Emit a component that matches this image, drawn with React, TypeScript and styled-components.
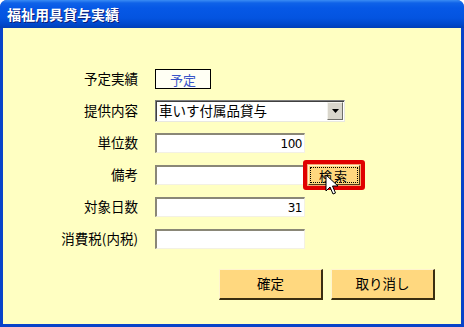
import React from "react";
import styled, { createGlobalStyle } from "styled-components";

const Global = createGlobalStyle`
  html, body { margin: 0; padding: 0; background: #fff; }
  body { font-family: "Noto Sans CJK JP", "Liberation Sans", sans-serif; }
`;

const Window = styled.div`
  width: 464px;
  height: 327px;
  box-sizing: border-box;
  display: flex;
  flex-direction: column;
  background: #0843c9;
  border-radius: 7px 7px 0 0;
  overflow: hidden;
`;

const TitleBar = styled.div`
  height: 28px;
  flex: none;
  display: flex;
  align-items: center;
  padding-left: 7px;
  background: linear-gradient(
    to bottom,
    #3a8cf4 0px,
    #0f62e8 3px,
    #0658e6 8px,
    #0454e0 18px,
    #0049cc 24px,
    #003fb8 28px
  );
  color: #fff;
  font-size: 14px;
  font-weight: bold;
  letter-spacing: 0px;
  text-shadow: 1px 1px 0 #0a1e7a;
`;

const Body = styled.div`
  flex: 1;
  margin: 0 3px 3px 3px;
  background: #ffffc2;
  display: flex;
  flex-direction: column;
  padding-top: 35px;
`;

const Form = styled.div`
  display: grid;
  grid-template-columns: 135px 1fr;
  grid-auto-rows: 32px;
  column-gap: 17px;
  align-items: center;
`;

const Label = styled.div`
  text-align: right;
  font-size: 13.5px;
  color: #000;
  white-space: nowrap;
  line-height: 1;
`;

const Control = styled.div`
  display: flex;
  align-items: center;
`;

const StatusBox = styled.div`
  width: 56px;
  height: 20px;
  box-sizing: border-box;
  border: 1px solid #000;
  background: #fffff4;
  color: #3a55c8;
  font-size: 13px;
  display: flex;
  align-items: center;
  justify-content: center;
`;

const Select = styled.div`
  width: 190px;
  height: 22px;
  box-sizing: border-box;
  background: #fff;
  border-top: 1px solid #7f7f7f;
  border-left: 1px solid #7f7f7f;
  border-right: 1px solid #e8e8e0;
  border-bottom: 1px solid #e8e8e0;
  box-shadow: inset 1px 1px 0 #404040;
  display: flex;
  align-items: center;
  font-size: 13.5px;
  padding-left: 3px;
`;

const SelectText = styled.div`
  flex: 1;
  line-height: 1;
`;

const ArrowBtn = styled.div`
  width: 16px;
  height: 18px;
  box-sizing: border-box;
  background: #d9d6cc;
  border-top: 1px solid #f4f3ee;
  border-left: 1px solid #f4f3ee;
  border-right: 1px solid #6f6e69;
  border-bottom: 1px solid #6f6e69;
  display: flex;
  align-items: center;
  justify-content: center;
  margin-right: 1px;
`;

const Input = styled.div`
  width: 150px;
  height: 20px;
  box-sizing: border-box;
  background: #fff;
  border-top: 2px solid #8a8777;
  border-left: 2px solid #8a8777;
  border-right: 1px solid #f3f1e4;
  border-bottom: 1px solid #f3f1e4;
  font-family: "DejaVu Sans", "Liberation Sans", sans-serif;
  font-size: 12px;
  display: flex;
  align-items: center;
  justify-content: flex-end;
  padding-right: 2px;
  letter-spacing: -0.5px;
`;

const SearchFrame = styled.div`
  position: relative;
  width: 62px;
  height: 30px;
  margin-left: -2px;
  box-sizing: border-box;
  border: 4px solid #e00000;
  border-radius: 3px;
  background: #f6a470;
  display: flex;
  align-items: center;
  justify-content: center;
`;

const SearchBtn = styled.div`
  width: 52px;
  height: 20px;
  box-sizing: border-box;
  background: #ffd77e;
  border-top: 1px solid #fff2c8;
  border-left: 1px solid #fff2c8;
  border-right: 1px solid #4a3a1a;
  border-bottom: 1px solid #4a3a1a;
  display: flex;
  align-items: center;
  justify-content: center;
  font-size: 13px;
  padding: 1px;
`;

const Focus = styled.div`
  width: 100%;
  height: 100%;
  box-sizing: border-box;
  border: 1px dotted #000;
  display: flex;
  align-items: center;
  justify-content: center;
  line-height: 1;
  letter-spacing: 2px;
`;

const Cursor = styled.svg`
  position: absolute;
  left: 18px;
  top: 10px;
  width: 14px;
  height: 22px;
`;

const Footer = styled.div`
  display: flex;
  gap: 8px;
  padding-left: 216px;
  margin-top: 14px;
`;

const BigBtn = styled.div`
  width: 104px;
  height: 31px;
  box-sizing: border-box;
  background: #ffd87f;
  border-top: 1px solid #fff4cf;
  border-left: 1px solid #fff4cf;
  border-right: 2px solid #3a2e10;
  border-bottom: 2px solid #3a2e10;
  display: flex;
  align-items: center;
  justify-content: center;
  font-size: 13.5px;
  line-height: 1;
`;

export default function App() {
  return (
    <>
      <Global />
      <Window>
        <TitleBar>福祉用具貸与実績</TitleBar>
        <Body>
          <Form>
            <Label>予定実績</Label>
            <Control>
              <StatusBox>予定</StatusBox>
            </Control>

            <Label>提供内容</Label>
            <Control>
              <Select>
                <SelectText>車いす付属品貸与</SelectText>
                <ArrowBtn>
                  <svg width="7" height="4" viewBox="0 0 7 4">
                    <path d="M0 0H7L3.5 4Z" fill="#000" />
                  </svg>
                </ArrowBtn>
              </Select>
            </Control>

            <Label>単位数</Label>
            <Control>
              <Input>100</Input>
            </Control>

            <Label>備考</Label>
            <Control>
              <Input />
              <SearchFrame>
                <SearchBtn>
                  <Focus>検索</Focus>
                </SearchBtn>
                <Cursor viewBox="0 0 14 22">
                  <path
                    d="M1 1 L1 17 L5 13 L8 20 L10.5 19 L7.5 12 L13 12 Z"
                    fill="#fff"
                    stroke="#000"
                    strokeWidth="1"
                    strokeLinejoin="miter"
                  />
                </Cursor>
              </SearchFrame>
            </Control>

            <Label>対象日数</Label>
            <Control>
              <Input>31</Input>
            </Control>

            <Label>消費税(内税)</Label>
            <Control>
              <Input />
            </Control>
          </Form>
          <Footer>
            <BigBtn>確定</BigBtn>
            <BigBtn>取り消し</BigBtn>
          </Footer>
        </Body>
      </Window>
    </>
  );
}
